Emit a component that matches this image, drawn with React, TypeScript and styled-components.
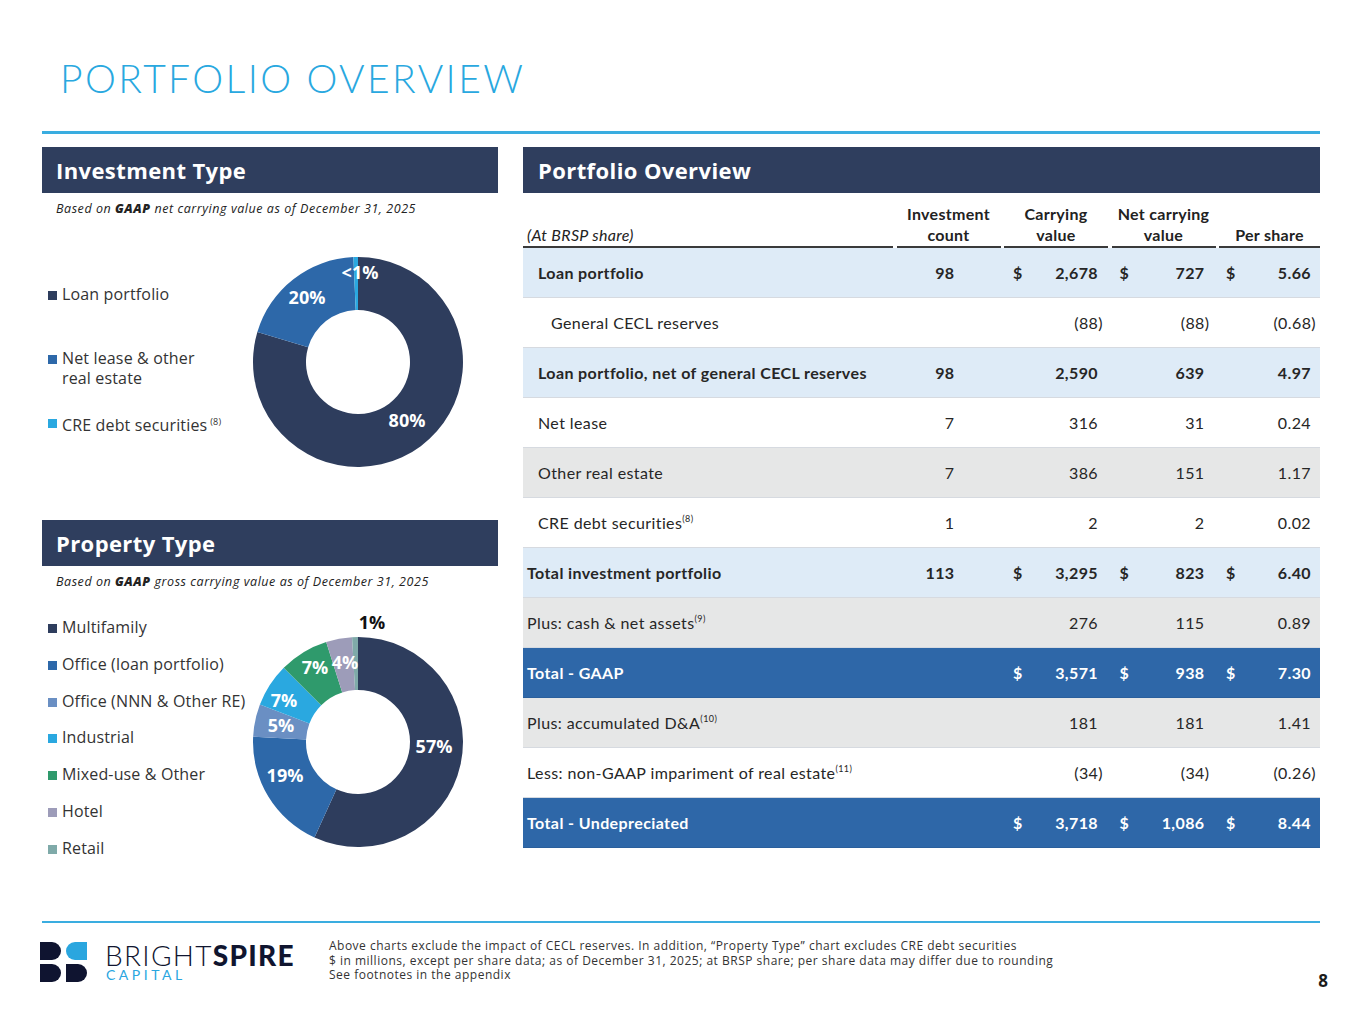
import React from 'react';
import styled, { createGlobalStyle } from 'styled-components';

const GlobalStyle = createGlobalStyle`
  * { box-sizing: border-box; }
  html, body { margin: 0; padding: 0; background: #fff; }
  body { font-family: 'Open Sans', Lato, Arial, sans-serif; color: #262626; }
`;

const Page = styled.div`
  width: 1365px;
  height: 1024px;
  padding: 59px 45px 0 42px;
  display: flex;
  flex-direction: column;
`;

const Title = styled.h1`
  margin: 0;
  padding-left: 18px;
  font-family: Lato, 'Open Sans', sans-serif;
  font-size: 39px;
  line-height: 39px;
  font-weight: 300;
  letter-spacing: 2.4px;
  color: #29a8df;
`;

const Rule = styled.div<{ $top: number; $h: number }>`
  margin-top: ${(p) => p.$top}px;
  height: ${(p) => p.$h}px;
  background: #3aade0;
`;

const Main = styled.div`
  margin-top: 13px;
  height: 774px;
  display: grid;
  grid-template-columns: 456px 797px;
  column-gap: 25px;
`;

const Column = styled.section`
  display: flex;
  flex-direction: column;
`;

const SectionHeader = styled.div<{ $pad: number }>`
  height: 46px;
  flex: none;
  display: flex;
  align-items: center;
  padding-left: ${(p) => p.$pad}px;
  background: #2f3e5e;
  color: #fff;
  font-size: 22px;
  letter-spacing: 0.4px;
  font-weight: 700;
`;

const Subtitle = styled.div`
  margin: 8px 0 0 14px;
  font-size: 12.5px;
  line-height: 16px;
  letter-spacing: 0.55px;
  font-style: italic;
  color: #222;

  b {
    font-weight: 800;
  }
`;

const ChartRow = styled.div<{ $h?: number }>`
  display: flex;
  align-items: flex-start;
  height: ${(p) => (p.$h ? `${p.$h}px` : 'auto')};
  flex: ${(p) => (p.$h ? 'none' : '1')};
`;

const Legend = styled.ul<{ $top: number }>`
  list-style: none;
  margin: ${(p) => p.$top}px 0 0 6px;
  padding: 0;
  width: 205px;
`;

const LegendItem = styled.li<{ $slot: number }>`
  display: flex;
  align-items: flex-start;
  height: ${(p) => p.$slot}px;
  font-size: 16px;
  line-height: 20px;
  letter-spacing: 0.15px;
  color: #333;

  sup {
    font-size: 9px;
    margin-left: 3px;
  }
`;

const Swatch = styled.span<{ $color: string }>`
  flex: none;
  width: 9px;
  height: 9px;
  margin: 7px 5px 0 0;
  background: ${(p) => p.$color};
`;

const ChartSvg = styled.svg<{ $top: number }>`
  flex: none;
  margin-top: ${(p) => p.$top}px;
  overflow: visible;
`;

const SliceLabel = styled.text<{ $dark?: boolean }>`
  fill: ${(p) => (p.$dark ? '#111' : '#fff')};
  font-family: 'Open Sans', Arial, sans-serif;
  font-size: 18px;
  font-weight: 700;
  text-anchor: middle;
  dominant-baseline: central;
`;

/* ---------- table ---------- */

const cols = '370px 104px 104px 104px 101px';

const HeadRow = styled.div`
  height: 55px;
  display: grid;
  grid-template-columns: ${cols};
  column-gap: 3.5px;
  font-family: Lato, 'Open Sans', sans-serif;
`;

const HeadCell = styled.div<{ $label?: boolean }>`
  display: flex;
  align-items: flex-end;
  justify-content: ${(p) => (p.$label ? 'flex-start' : 'center')};
  padding: 0 0 1px ${(p) => (p.$label ? 4 : 0)}px;
  border-bottom: 2px solid #3a3a3a;
  text-align: center;
  font-size: 16px;
  line-height: 21px;
  letter-spacing: 0.3px;
  font-weight: ${(p) => (p.$label ? 400 : 700)};
  font-style: ${(p) => (p.$label ? 'italic' : 'normal')};
  color: #222;
`;

type Tone = 'blue' | 'white' | 'grey' | 'total';

const toneBg: Record<Tone, string> = {
  blue: '#deebf7',
  white: '#ffffff',
  grey: '#e6e7e7',
  total: '#2e67a8',
};

const Row = styled.div<{ $tone: Tone; $bold: boolean }>`
  height: 50px;
  display: grid;
  grid-template-columns: ${cols};
  column-gap: 3.5px;
  align-items: center;
  background: ${(p) => toneBg[p.$tone]};
  border-bottom: 1px solid ${(p) => (p.$tone === 'total' ? '#2a5f9c' : '#d6dae0')};
  color: ${(p) => (p.$tone === 'total' ? '#fff' : '#262626')};
  font-family: Lato, 'Open Sans', sans-serif;
  font-size: 16px;
  letter-spacing: 0.4px;
  font-weight: ${(p) => (p.$bold ? 700 : 400)};
`;

const LabelCell = styled.div<{ $level: number }>`
  padding-left: ${(p) => [4, 15, 28][p.$level]}px;
  white-space: nowrap;

  sup {
    font-size: 9px;
    vertical-align: 7px;
    line-height: 0;
  }
`;

const CountCell = styled.div`
  text-align: right;
  padding-right: 46px;
`;

const MoneyCell = styled.div<{ $pl: number; $pr: number }>`
  display: flex;
  justify-content: space-between;
  padding: 0 ${(p) => p.$pr}px 0 ${(p) => p.$pl}px;
`;

const Paren = styled.span`
  margin-right: -5px;
`;

/* ---------- footer ---------- */

const Footer = styled.footer`
  display: flex;
  align-items: flex-start;
  padding-top: 16px;
`;

const Brand = styled.div`
  display: flex;
  align-items: flex-start;
  gap: 17px;
  margin-left: -2px;
`;

const Wordmark = styled.div`
  display: flex;
  flex-direction: column;
  margin-top: 1.5px;
`;

const BrandName = styled.div`
  font-family: Lato, 'Open Sans', sans-serif;
  font-size: 28px;
  line-height: 28px;
  letter-spacing: 1.3px;
  color: #10152f;
  font-weight: 300;

  strong {
    font-weight: 900;
  }
`;

const BrandSub = styled.div`
  margin-top: 1px;
  padding-left: 1px;
  font-family: Lato, 'Open Sans', sans-serif;
  font-size: 14px;
  line-height: 10px;
  letter-spacing: 3.5px;
  color: #2aa6df;
  font-weight: 400;
`;

const FootNotes = styled.div`
  margin-left: 34px;
  font-size: 12px;
  line-height: 14.5px;
  letter-spacing: 0.5px;
  color: #333;
`;

const PageNo = styled.div`
  margin: 32px -8px 0 auto;
  font-size: 17px;
  line-height: 20px;
  font-weight: 700;
  color: #1b1b1b;
`;

/* ---------- data ---------- */

type Slice = { frac: number; color: string };

const arcPath = (c: number, R: number, r: number, a0: number, a1: number) => {
  const pt = (rad: number, a: number) => [
    c + rad * Math.sin(a * 2 * Math.PI),
    c - rad * Math.cos(a * 2 * Math.PI),
  ];
  const large = a1 - a0 > 0.5 ? 1 : 0;
  const [x0, y0] = pt(R, a0);
  const [x1, y1] = pt(R, a1);
  const [x2, y2] = pt(r, a1);
  const [x3, y3] = pt(r, a0);
  return `M${x0} ${y0} A${R} ${R} 0 ${large} 1 ${x1} ${y1} L${x2} ${y2} A${r} ${r} 0 ${large} 0 ${x3} ${y3}Z`;
};

const Donut = ({
  slices,
  labels,
  top,
}: {
  slices: Slice[];
  labels: { t: string; x: number; y: number; dark?: boolean }[];
  top: number;
}) => {
  let acc = 0;
  return (
    <ChartSvg $top={top} width={210} height={210} viewBox="0 0 210 210">
      {slices.map((s, i) => {
        const a0 = acc;
        acc += s.frac;
        return <path key={i} d={arcPath(105, 105, 52, a0, acc)} fill={s.color} />;
      })}
      {labels.map((l, i) => (
        <SliceLabel key={i} x={l.x} y={l.y} $dark={l.dark}>
          {l.t}
        </SliceLabel>
      ))}
    </ChartSvg>
  );
};

const C = {
  navy: '#2e3d5d',
  blue: '#2d68a9',
  slate: '#6a8fc3',
  sky: '#2aa8e0',
  green: '#2f9a6c',
  lav: '#9d9cb9',
  teal: '#7faaa9',
};

type TableRow = {
  label: string;
  sup?: string;
  level: number;
  bold?: boolean;
  tone: Tone;
  count?: string;
  dollar?: boolean;
  vals: string[];
};

const rows: TableRow[] = [
  { label: 'Loan portfolio', level: 1, bold: true, tone: 'blue', count: '98', dollar: true, vals: ['2,678', '727', '5.66'] },
  { label: 'General CECL reserves', level: 2, tone: 'white', vals: ['(88)', '(88)', '(0.68)'] },
  { label: 'Loan portfolio, net of general CECL reserves', level: 1, bold: true, tone: 'blue', count: '98', vals: ['2,590', '639', '4.97'] },
  { label: 'Net lease', level: 1, tone: 'white', count: '7', vals: ['316', '31', '0.24'] },
  { label: 'Other real estate', level: 1, tone: 'grey', count: '7', vals: ['386', '151', '1.17'] },
  { label: 'CRE debt securities', sup: '(8)', level: 1, tone: 'white', count: '1', vals: ['2', '2', '0.02'] },
  { label: 'Total investment portfolio', level: 0, bold: true, tone: 'blue', count: '113', dollar: true, vals: ['3,295', '823', '6.40'] },
  { label: 'Plus: cash & net assets', sup: '(9)', level: 0, tone: 'grey', vals: ['276', '115', '0.89'] },
  { label: 'Total - GAAP', level: 0, bold: true, tone: 'total', dollar: true, vals: ['3,571', '938', '7.30'] },
  { label: 'Plus: accumulated D&A', sup: '(10)', level: 0, tone: 'grey', vals: ['181', '181', '1.41'] },
  { label: 'Less: non-GAAP impariment of real estate', sup: '(11)', level: 0, tone: 'white', vals: ['(34)', '(34)', '(0.26)'] },
  { label: 'Total - Undepreciated', level: 0, bold: true, tone: 'total', dollar: true, vals: ['3,718', '1,086', '8.44'] },
];

const moneyPad = [
  { pl: 9, pr: 10 },
  { pl: 8, pr: 11 },
  { pl: 7, pr: 9 },
];

const Amount = ({ v }: { v: string }) =>
  v.endsWith(')') ? (
    <span>
      {v.slice(0, -1)}
      <Paren>)</Paren>
    </span>
  ) : (
    <span>{v}</span>
  );

const LogoMark = () => (
  <svg width="48" height="40" viewBox="0 0 48 40" style={{ marginTop: 3 }}>
    <path d="M0 0 H12 A9 9 0 0 1 12 18 H0 Z" fill="#0f1430" />
    <path d="M47 0 H35 A9 9 0 0 0 35 18 H47 Z" fill="#2aa6df" />
    <path d="M0 22 H12 A9 9 0 0 1 12 40 H0 Z" fill="#0f1430" />
    <path d="M26 22 H38 A9 9 0 0 1 38 40 H26 Z" fill="#0f1430" />
  </svg>
);

const App = () => {
  return (
    <>
      <GlobalStyle />
      <Page>
        <Title>PORTFOLIO OVERVIEW</Title>
        <Rule $top={33} $h={3} />
        <Main>
          <Column>
            <SectionHeader $pad={14}>Investment Type</SectionHeader>
            <Subtitle>
              Based on <b>GAAP</b> net carrying value as of December 31, 2025
            </Subtitle>
            <ChartRow $h={303}>
              <Legend $top={67}>
                <LegendItem $slot={64}>
                  <Swatch $color={C.navy} />
                  <span>Loan portfolio</span>
                </LegendItem>
                <LegendItem $slot={64}>
                  <Swatch $color={C.blue} />
                  <span>
                    Net lease &amp; other
                    <br />
                    real estate
                  </span>
                </LegendItem>
                <LegendItem $slot={20}>
                  <Swatch $color={C.sky} />
                  <span>
                    CRE debt securities<sup>(8)</sup>
                  </span>
                </LegendItem>
              </Legend>
              <Donut
                top={40}
                slices={[
                  { frac: 0.796, color: C.navy },
                  { frac: 0.197, color: C.blue },
                  { frac: 0.007, color: C.sky },
                ]}
                labels={[
                  { t: '80%', x: 154, y: 163 },
                  { t: '20%', x: 54, y: 40 },
                  { t: '<1%', x: 107, y: 15 },
                ]}
              />
            </ChartRow>

            <SectionHeader $pad={14}>Property Type</SectionHeader>
            <Subtitle>
              Based on <b>GAAP</b> gross carrying value as of December 31, 2025
            </Subtitle>
            <ChartRow>
              <Legend $top={27}>
                {[
                  ['Multifamily', C.navy],
                  ['Office (loan portfolio)', C.blue],
                  ['Office (NNN & Other RE)', C.slate],
                  ['Industrial', C.sky],
                  ['Mixed-use & Other', C.green],
                  ['Hotel', C.lav],
                  ['Retail', C.teal],
                ].map(([name, color]) => (
                  <LegendItem key={name} $slot={36.8}>
                    <Swatch $color={color} />
                    <span>{name}</span>
                  </LegendItem>
                ))}
              </Legend>
              <Donut
                top={47}
                slices={[
                  { frac: 0.568, color: C.navy },
                  { frac: 0.19, color: C.blue },
                  { frac: 0.05, color: C.slate },
                  { frac: 0.067, color: C.sky },
                  { frac: 0.076, color: C.green },
                  { frac: 0.04, color: C.lav },
                  { frac: 0.009, color: C.teal },
                ]}
                labels={[
                  { t: '57%', x: 181, y: 109 },
                  { t: '19%', x: 32, y: 138 },
                  { t: '5%', x: 28, y: 88 },
                  { t: '7%', x: 31, y: 63 },
                  { t: '7%', x: 62, y: 30 },
                  { t: '4%', x: 92, y: 25 },
                  { t: '1%', x: 119, y: -15, dark: true },
                ]}
              />
            </ChartRow>
          </Column>

          <Column>
            <SectionHeader $pad={15}>Portfolio Overview</SectionHeader>
            <HeadRow>
              <HeadCell $label>(At BRSP share)</HeadCell>
              <HeadCell>
                Investment
                <br />
                count
              </HeadCell>
              <HeadCell>
                Carrying
                <br />
                value
              </HeadCell>
              <HeadCell>
                Net carrying
                <br />
                value
              </HeadCell>
              <HeadCell>Per share</HeadCell>
            </HeadRow>
            {rows.map((r) => (
              <Row key={r.label} $tone={r.tone} $bold={!!r.bold}>
                <LabelCell $level={r.level}>
                  {r.label}
                  {r.sup && <sup>{r.sup}</sup>}
                </LabelCell>
                <CountCell>{r.count ?? ''}</CountCell>
                {r.vals.map((v, i) => (
                  <MoneyCell key={i} $pl={moneyPad[i].pl} $pr={moneyPad[i].pr}>
                    <span>{r.dollar ? '$' : ''}</span>
                    <Amount v={v} />
                  </MoneyCell>
                ))}
              </Row>
            ))}
          </Column>
        </Main>

        <Rule $top={0} $h={2} />
        <Footer>
          <Brand>
            <LogoMark />
            <Wordmark>
              <BrandName>
                BRIGHT<strong>SPIRE</strong>
              </BrandName>
              <BrandSub>CAPITAL</BrandSub>
            </Wordmark>
          </Brand>
          <FootNotes>
            Above charts exclude the impact of CECL reserves. In addition, “Property Type” chart excludes CRE debt securities
            <br />$ in millions, except per share data; as of December 31, 2025; at BRSP share; per share data may differ due to rounding
            <br />
            See footnotes in the appendix
          </FootNotes>
          <PageNo>8</PageNo>
        </Footer>
      </Page>
    </>
  );
};

export default App;
